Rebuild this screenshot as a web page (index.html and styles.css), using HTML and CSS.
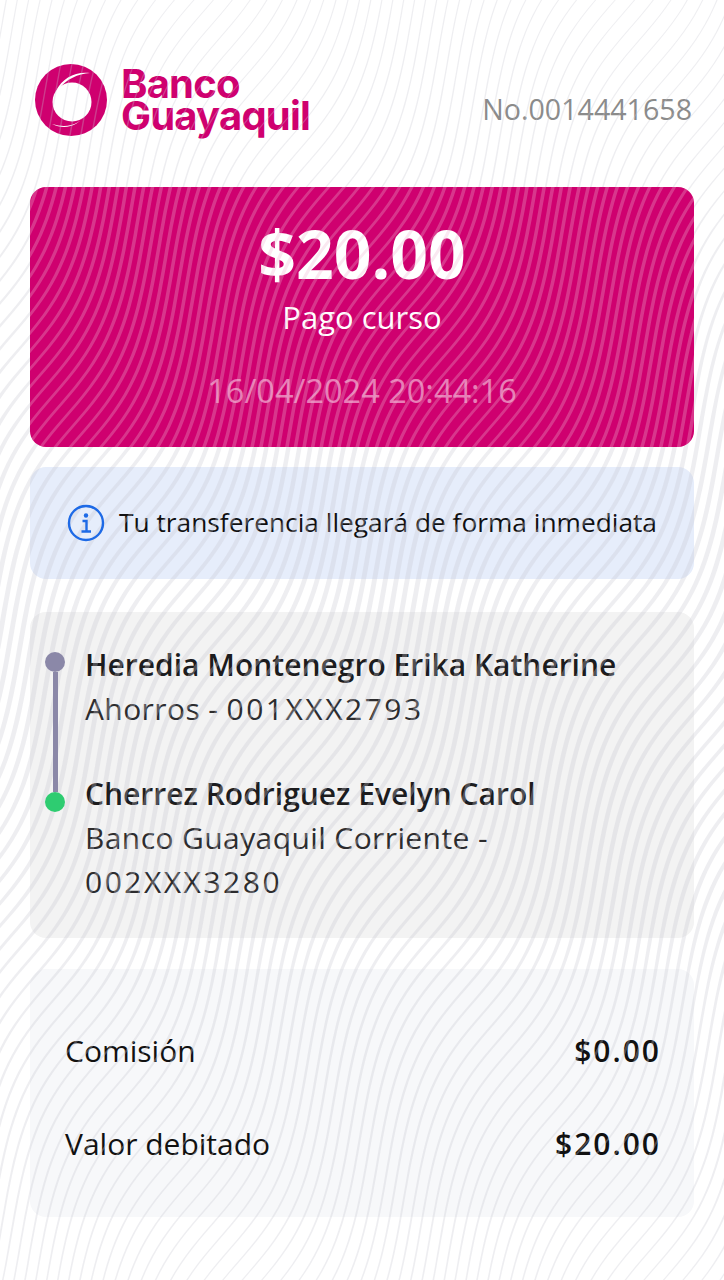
FILE: index.html
```html
<!DOCTYPE html>
<html lang="es">
<head>
  <meta charset="UTF-8" />
  <meta name="viewport" content="width=device-width, initial-scale=1.0" />
  <title>Banco Guayaquil: Comprobante</title>
  <link rel="stylesheet" href="styles.css">
</head>
<body>
  <svg class="waves" data-step="14"></svg>

  <header class="top">
    <div class="brand">
      <svg class="brand-mark" viewBox="0 0 72 72" aria-hidden="true">
        <circle cx="36" cy="36" r="36" fill="#cf006f"/>
        <circle cx="37" cy="38" r="19.5" fill="#fff"/>
        <path d="M21 27C27 14 41 7 55 9C43 10 31 15 24 25Z" fill="#fff"/>
        <path d="M17 60C29 66 44 63 51 49C46 60 33 65 17 60Z" fill="#fff"/>
      </svg>
      <div class="brand-name">Banco<br>Guayaquil</div>
    </div>
    <div class="ticket-no">No.0014441658</div>
  </header>

  <section class="hero">
    <div class="amount">$20.00</div>
    <div class="concept">Pago curso</div>
    <div class="stamp">16/04/2024 20:44:16</div>
    <svg class="waves" data-step="11" data-width="3.6"></svg>
  </section>

  <section class="notice">
    <svg class="notice-icon" viewBox="0 0 38 38" aria-hidden="true">
      <circle cx="19" cy="19" r="17" fill="none" stroke="#1e6ae6" stroke-width="2.4"/>
      <circle cx="19" cy="11.5" r="2.2" fill="#1e6ae6"/>
      <path d="M15.5 17H19.5V27M14.5 27.5H24" fill="none" stroke="#1e6ae6" stroke-width="2.4"/>
    </svg>
    <p>Tu transferencia llegará de forma inmediata</p>
  </section>

  <section class="panel route">
    <div class="rail">
      <span class="dot"></span>
      <span class="rail-line"></span>
      <span class="dot dot-end"></span>
    </div>
    <div class="stops">
      <div class="stop">
        <strong>Heredia Montenegro Erika Katherine</strong>
        <span>Ahorros - <span class="acct">001XXX2793</span></span>
      </div>
      <div class="stop">
        <strong>Cherrez Rodriguez Evelyn Carol</strong>
        <span>Banco Guayaquil Corriente - <span class="acct">002XXX3280</span></span>
      </div>
    </div>
  </section>

  <section class="panel totals">
    <div class="total-row"><span>Comisión</span><strong>$0.00</strong></div>
    <div class="total-row"><span>Valor debitado</span><strong>$20.00</strong></div>
  </section>

  <script src="app.js"></script>
</body>
</html>
```
FILE: styles.css
```css
:root {
  --brand: #cf006f;
  --ink: #1c1c1e;
  --font: "Open Sans", "Noto Sans", sans-serif;
}

html { overflow: hidden; }

body {
  position: relative;
  margin: 0;
  padding: 64px 30px 63px;
  background-color: #fff;
  color: var(--ink);
  font-family: var(--font);
  font-size: 30px;
  line-height: 44px;
}

.waves {
  position: absolute;
  top: 0;
  left: 0;
  width: 100%;
  height: 100%;
  pointer-events: none;
}
.waves path { fill: rgba(200, 200, 208, 0.3); }
.hero .waves path { fill: rgba(240, 180, 210, 0.3); }
body > .waves { z-index: 1; }

.top {
  display: flex;
  justify-content: space-between;
  align-items: center;
  padding: 0 2px 0 5px;
  margin-bottom: 51px;
}

.brand {
  display: flex;
  align-items: center;
  gap: 14px;
}
.brand-mark { width: 72px; height: 72px; }
.brand-name {
  font-family: "Inter", sans-serif;
  font-size: 40px;
  font-weight: 700;
  line-height: 32px;
  letter-spacing: -0.8px;
  color: var(--brand);
}

.ticket-no { color: #8b8b8b; font-size: 28.6px; padding-top: 17px; }

.hero {
  position: relative;
  z-index: 2;
  height: 260px;
  box-sizing: border-box;
  padding-top: 26px;
  overflow: hidden;
  border-radius: 16px;
  background-color: var(--brand);
  color: #fff;
  text-align: center;
}
.amount { font-size: 66px; font-weight: 700; line-height: 80px; }
.concept { font-size: 31px; line-height: 44px; margin-top: 2px; }
.stamp { font-size: 32.5px; line-height: 44px; margin-top: 30px; color: rgba(255, 255, 255, 0.5); }

.notice {
  display: flex;
  align-items: center;
  gap: 14px;
  height: 112px;
  margin-top: 20px;
  padding-left: 37px;
  border-radius: 16px;
  background-color: #e6edfb;
}
.notice p { margin: 0 0 3px; font-size: 26.3px; color: #101012; }
.notice-icon { position: relative; z-index: 2; width: 38px; height: 38px; flex: none; }

.panel { border-radius: 16px; }

.route {
  display: flex;
  gap: 20px;
  margin-top: 33px;
  padding: 31px 34px 34px 15px;
  background-color: #f3f3f3;
}

.rail {
  position: relative;
  z-index: 2;
  display: flex;
  flex-direction: column;
  align-items: center;
  flex: none;
  width: 20px;
  height: 160px;
  margin-top: 9px;
}
.dot { width: 20px; height: 20px; flex: none; border-radius: 50%; background-color: #8b88a8; }
.dot-end { background-color: #2ecc71; }
.rail-line { width: 5px; flex: 1; background-color: #8b88a8; }

.stops { display: flex; flex-direction: column; gap: 41px; }
.stop strong { display: block; font-weight: 600; }
.stop > span { display: block; color: #2c2c2e; letter-spacing: 0.4px; }
.acct { letter-spacing: 2.5px; }

.totals {
  display: flex;
  flex-direction: column;
  gap: 49px;
  margin-top: 31px;
  padding: 60px 35px 51px;
  background-color: #f7f8fa;
}
.total-row { display: flex; justify-content: space-between; color: #111; }
.total-row strong { font-weight: 600; letter-spacing: 2px; margin-right: -2px; }
```
FILE: app.js
```js
// thin bands on the page, fatter across the middle
const pageWidths = [[0, 1.2], [180, 1.6], [450, 4.5], [620, 5], [900, 4.5], [1000, 2.8], [1280, 1.6]];

function pageWidth(y) {
  for (let i = 1; i < pageWidths.length; i++) {
    const [y0, w0] = pageWidths[i - 1];
    const [y1, w1] = pageWidths[i];
    if (y <= y1) return w0 + (w1 - w0) * (y - y0) / (y1 - y0);
  }
  return 1.6;
}

// contour of x + 0.42y + 19 sin(k(y - 1.44x) + p) = c
function lineX(c, y) {
  let x = c - 0.42 * y;
  for (let i = 0; i < 8; i++) {
    x = c - 0.42 * y - 19 * Math.sin(0.01047 * (y - 1.44 * x) + 2.93);
  }
  return x;
}

document.querySelectorAll('.waves').forEach(svg => {
  const box = svg.getBoundingClientRect();
  const step = Number(svg.dataset.step);
  const fixed = Number(svg.dataset.width);
  let d = '';

  for (let c = -100; c < 724 + 0.42 * 1280 + 100; c += step) {
    const left = [];
    const right = [];
    for (let y = box.top - 8; y <= box.bottom + 8; y += 8) {
      const x = lineX(c, y) - box.left;
      const w = (fixed || pageWidth(y)) / 2;
      left.push(`${(x - w).toFixed(1)} ${y - box.top}`);
      right.unshift(`${(x + w).toFixed(1)} ${y - box.top}`);
    }
    d += `M${left.join('L')}L${right.join('L')}Z`;
  }

  const path = document.createElementNS('http://www.w3.org/2000/svg', 'path');
  path.setAttribute('d', d);
  svg.appendChild(path);
});
```
